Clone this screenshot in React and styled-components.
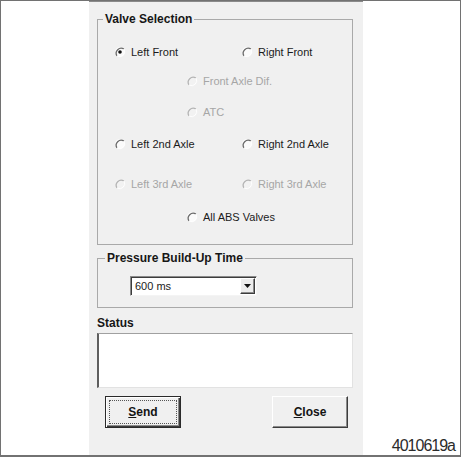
import React from "react";
import styled, { createGlobalStyle } from "styled-components";

const GlobalStyle = createGlobalStyle`
  html, body {
    margin: 0;
    padding: 0;
    background: #fff;
  }
  body {
    font-family: "Liberation Sans", Arial, sans-serif;
    color: #1b1b1b;
  }
`;

const valveRows = [
  { gap: 18, items: [{ label: "Left Front", checked: true }, { label: "Right Front" }] },
  { gap: 13, center: true, items: [{ label: "Front Axle Dif.", disabled: true }] },
  { gap: 15, center: true, items: [{ label: "ATC", disabled: true }] },
  { gap: 16, items: [{ label: "Left 2nd Axle" }, { label: "Right 2nd Axle" }] },
  { gap: 24, items: [{ label: "Left 3rd Axle", disabled: true }, { label: "Right 3rd Axle", disabled: true }] },
  { gap: 17, center: true, items: [{ label: "All ABS Valves" }] },
];

const RadioIcon = ({ checked, disabled }) => (
  <svg width="12" height="12" viewBox="0 0 12 12">
    <circle cx="6" cy="6" r="5" fill={disabled ? "#f2f2f2" : "#fbfbfb"} />
    <path d="M9.9 3 A5 5 0 0 0 3 9.9" fill="none" stroke={disabled ? "#b4b4b4" : "#6a6a6a"} strokeWidth="1.3" />
    <path d="M3 9.9 A5 5 0 0 0 9.9 3" fill="none" stroke="#ffffff" strokeWidth="1" />
    {checked && <circle cx="6" cy="6" r="1.8" fill="#111" />}
  </svg>
);

const ArrowIcon = () => (
  <svg width="7" height="4" viewBox="0 0 7 4">
    <polygon points="0,0 7,0 3.5,4" fill="#111" />
  </svg>
);

const App = () => {
  return (
    <>
      <GlobalStyle />
      <Page>
        <Gutter />
        <Panel>
          <GroupBox $bottom={19}>
            <Legend $offset={5}>Valve Selection</Legend>
            {valveRows.map((row, i) => (
              <RadioRow key={i} $gap={row.gap} $center={row.center}>
                {row.items.map((item) => (
                  <Radio key={item.label} $disabled={item.disabled}>
                    <RadioIcon checked={item.checked} disabled={item.disabled} />
                    {item.label}
                  </Radio>
                ))}
              </RadioRow>
            ))}
          </GroupBox>

          <GroupBox $bottom={11} $top={6}>
            <Legend $offset={7}>Pressure Build-Up Time</Legend>
            <Combo>
              <ComboText>600 ms</ComboText>
              <ComboButton>
                <ArrowIcon />
              </ComboButton>
            </Combo>
          </GroupBox>

          <SectionLabel>Status</SectionLabel>
          <StatusBox />

          <ButtonRow>
            <Button $default>
              <FocusRing $on>
                <u>S</u>end
              </FocusRing>
            </Button>
            <Button>
              <FocusRing>
                <u>C</u>lose
              </FocusRing>
            </Button>
          </ButtonRow>
        </Panel>
        <Aside>
          <FigureId>4010619a</FigureId>
        </Aside>
      </Page>
    </>
  );
};

export default App;

const Page = styled.div({
  width: '461px',
  height: '457px',
  boxSizing: 'border-box',
  border: '1px solid #727272',
  borderBottomWidth: '2px',
  display: 'flex',
  background: '#fff',
});

const Gutter = styled.div({
  width: '88px',
  flexShrink: 0,
});

const Panel = styled.div({
  width: '274px',
  flexShrink: 0,
  boxSizing: 'border-box',
  background: '#f0f0f0',
  borderTop: '1px solid #8a8a8a',
  padding: '10px 10px 0 8px',
  display: 'flex',
  flexDirection: 'column',
});

const GroupBox = styled.fieldset`
  margin: ${(p) => p.$top || 0}px 0 0 0;
  padding: 0 0 ${(p) => p.$bottom}px 0;
  border: 1px solid #a9a9a9;
  min-width: 0;
`;

const Legend = styled.legend`
  margin-left: ${(p) => p.$offset}px;
  padding: 0 2px;
  font-size: 12px;
  line-height: 14px;
  font-weight: bold;
  color: #161616;
`;

const RadioRow = styled.div`
  display: grid;
  grid-template-columns: ${(p) => (p.$center ? 'auto' : '127px auto')};
  padding-left: ${(p) => (p.$center ? 88 : 16)}px;
  margin-top: ${(p) => p.$gap}px;
  height: 16px;
  align-items: center;
`;

const Radio = styled.label`
  display: flex;
  align-items: center;
  gap: 5px;
  font-size: 11px;
  line-height: 16px;
  white-space: nowrap;
  color: ${(p) => (p.$disabled ? '#a6a6a6' : '#1b1b1b')};
`;

const Combo = styled.div({
  margin: '11px 0 0 32px',
  width: '127px',
  height: '20px',
  boxSizing: 'border-box',
  display: 'flex',
  padding: '1px',
  background: '#fff',
  border: '1px solid',
  borderColor: '#8a8a8a #f4f4f4 #f4f4f4 #8a8a8a',
  boxShadow: 'inset 1px 1px 0 #3c3c3c',
});

const ComboText = styled.span({
  flex: 1,
  fontSize: '11px',
  lineHeight: '16px',
  paddingLeft: '3px',
  color: '#1b1b1b',
});

const ComboButton = styled.span({
  width: '15px',
  boxSizing: 'border-box',
  display: 'flex',
  alignItems: 'center',
  justifyContent: 'center',
  background: '#ececec',
  border: '1px solid',
  borderColor: '#fff #3c3c3c #3c3c3c #fff',
  boxShadow: 'inset -1px -1px 0 #8a8a8a',
});

const SectionLabel = styled.div({
  marginTop: '8px',
  fontSize: '12px',
  lineHeight: '14px',
  fontWeight: 'bold',
  color: '#161616',
});

const StatusBox = styled.div({
  marginTop: '3px',
  height: '55px',
  boxSizing: 'border-box',
  background: '#fff',
  borderStyle: 'solid',
  borderWidth: '1px 1px 1px 2px',
  borderColor: '#a0a0a0 #e2e2e2 #e2e2e2 #5e5e5e',
});

const ButtonRow = styled.div({
  marginTop: '8px',
  display: 'flex',
  justifyContent: 'space-between',
  padding: '0 5px 0 8px',
});

const Button = styled.div`
  width: 76px;
  height: 32px;
  box-sizing: border-box;
  display: flex;
  padding: 3px;
  background: #f0f0f0;
  border: 1px solid;
  border-color: ${(p) => (p.$default ? '#2a2a2a' : '#fff #3c3c3c #3c3c3c #fff')};
  box-shadow: ${(p) =>
    p.$default
      ? 'inset 1px 1px 0 #fff, inset -1px -1px 0 #3c3c3c, inset -2px -2px 0 #8a8a8a'
      : 'inset -1px -1px 0 #8a8a8a'};
`;

const FocusRing = styled.span`
  flex: 1;
  display: flex;
  align-items: center;
  justify-content: center;
  border: 1px dotted ${(p) => (p.$on ? '#555' : 'transparent')};
  font-size: 12px;
  font-weight: bold;
  color: #141414;
`;

const Aside = styled.div({
  flex: 1,
  display: 'flex',
  alignItems: 'flex-end',
  justifyContent: 'flex-end',
  padding: '0 5px 1px 0',
});

const FigureId = styled.div({
  fontSize: '16px',
  lineHeight: '16px',
  letterSpacing: '-1px',
  color: '#2b2b2b',
});
